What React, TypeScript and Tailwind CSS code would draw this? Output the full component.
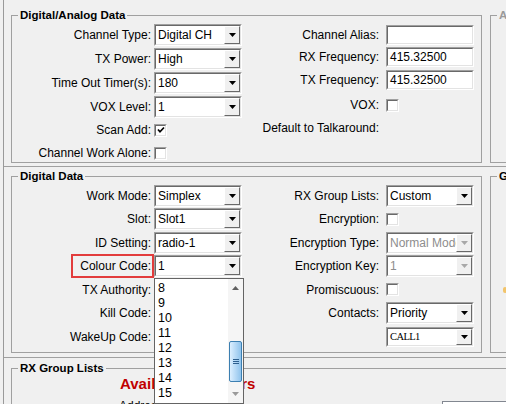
import React from "react";

// classic sunken edge used by combos, edits and checkboxes
const OUTER = "border border-t-[#a0a0a0] border-l-[#a0a0a0] border-r-white border-b-white";
const INNER = "border border-t-[#696969] border-l-[#696969] border-r-[#e3e3e3] border-b-[#e3e3e3]";

const Arrow = ({ color = "#000" }: { color?: string }) => (
  <svg width="7" height="4" viewBox="0 0 7 4">
    <polygon points="0,0 7,0 3.5,4" fill={color} />
  </svg>
);

function Combo({ value, short, disabled, serif }: { value?: string; short?: boolean; disabled?: boolean; serif?: boolean }) {
  return (
    <div className={`${OUTER} ${short ? "h-[20px]" : "h-[22px]"} w-[88px]`}>
      <div className={`${INNER} flex h-full w-full items-center bg-white`}>
        <span
          className={`flex-1 overflow-hidden whitespace-nowrap pl-[2px] ${disabled ? "text-[#8d8d8d]" : "text-black"} ${
            serif ? "font-['Liberation_Serif',serif] text-[10.5px] tracking-[-0.6px]" : ""
          }`}
        >
          {value}
        </span>
        <div className="flex h-full w-[16px] items-center justify-center border border-t-white border-l-white border-r-[#696969] border-b-[#696969] bg-[#f0f0f0]">
          <Arrow color={disabled ? "#a8a8a8" : "#000"} />
        </div>
      </div>
    </div>
  );
}

function Edit({ value }: { value?: string }) {
  return (
    <div className={`${OUTER} h-[20px] w-[88px]`}>
      <div className={`${INNER} flex h-full w-full items-center bg-white pl-[2px]`}>{value}</div>
    </div>
  );
}

function Check({ checked }: { checked?: boolean }) {
  return (
    <div className={`${OUTER} h-[13px] w-[13px]`}>
      <div className={`${INNER} flex h-full w-full items-center justify-center bg-white`}>
        {checked && (
          <svg width="8" height="8" viewBox="0 0 8 8">
            <polyline points="1,3.5 3,5.8 7,1.5" fill="none" stroke="#000" strokeWidth="1.7" />
          </svg>
        )}
      </div>
    </div>
  );
}

const Legend = ({ children, gray }: { children: React.ReactNode; gray?: boolean }) => (
  <legend className={`ml-[6px] px-[2px] text-[11.5px] font-bold leading-[14px] ${gray ? "text-[#9a9a9a]" : "text-black"}`}>
    {children}
  </legend>
);

function ColourList() {
  return (
    <div className="absolute left-0 top-[23px] z-10 flex h-[126px] w-[90px] border border-[#646464] bg-white">
      <div className="flex-1 pl-[3px] pt-[2px]">
        {["8", "9", "10", "11", "12", "13", "14", "15"].map((n) => (
          <div key={n} className="h-[15px] text-[12.5px] leading-[15px]">{n}</div>
        ))}
      </div>
      <div className="flex w-[15px] flex-col bg-[#f5f5f5]">
        <div className="flex h-[17px] items-center justify-center">
          <svg width="7" height="4" viewBox="0 0 7 4"><polygon points="0,4 7,4 3.5,0" fill="#606060" /></svg>
        </div>
        <div className="h-[45px]" />
        <div className="mx-[1px] flex h-[41px] flex-col items-center justify-center gap-[1px] rounded-[2px] border border-[#3c7fb1] bg-gradient-to-r from-[#dcefff] to-[#8fc3ec]">
          <div className="h-[1px] w-[6px] bg-[#2d5f8f]" />
          <div className="h-[1px] w-[6px] bg-[#2d5f8f]" />
          <div className="h-[1px] w-[6px] bg-[#2d5f8f]" />
        </div>
        <div className="h-[3px]" />
        <div className="flex h-[17px] items-center justify-center">
          <Arrow color="#9a9a9a" />
        </div>
      </div>
    </div>
  );
}

type Row = { l: string; lc: React.ReactNode; r: string; rc: React.ReactNode };

export default function App() {
  const digital: Row[] = [
    { l: "Work Mode:", lc: <Combo value="Simplex" />, r: "RX Group Lists:", rc: <Combo value="Custom" /> },
    { l: "Slot:", lc: <Combo value="Slot1" />, r: "Encryption:", rc: <Check /> },
    { l: "ID Setting:", lc: <Combo value="radio-1" />, r: "Encryption Type:", rc: <Combo value="Normal Mode" disabled /> },
    {
      l: "Colour Code:",
      lc: (
        <div className="relative">
          <Combo value="1" />
          <ColourList />
        </div>
      ),
      r: "Encryption Key:",
      rc: <Combo value="1" disabled />,
    },
    { l: "TX Authority:", lc: <Combo value="Allow All" />, r: "Promiscuous:", rc: <Check /> },
    { l: "Kill Code:", lc: <Combo value="" />, r: "Contacts:", rc: <Combo value="Priority" /> },
    { l: "WakeUp Code:", lc: <Combo value="" />, r: "", rc: <Combo value="CALL1" short serif /> },
  ];

  return (
    <div className="relative h-[404px] w-[506px] overflow-hidden bg-[#f0f0f0] font-['Liberation_Sans',Arial,sans-serif] text-[12px] text-black">
      <div className="ml-[3px] h-full border-l border-l-[#9a9a9a]">
        {/* channel data */}
        <div className="flex h-[167px] border-b border-b-[#a0a0a0] pl-[7px] pt-[8px]">
          <fieldset className="h-[155px] w-[471px] shrink-0 border border-[#a0a0a0]">
            <Legend>Digital/Analog Data</Legend>
            <div className="flex">
              <div className="flex w-[230px] flex-col pt-[1px]">
                {[
                  ["Channel Type:", <Combo value="Digital CH" />],
                  ["TX Power:", <Combo value="High" />],
                  ["Time Out Timer(s):", <Combo value="180" />],
                  ["VOX Level:", <Combo value="1" />],
                ].map(([label, ctl], i) => (
                  <div key={i} className="flex h-[24px] items-center">
                    <span className="w-[139px] text-right">{label}</span>
                    <div className="ml-[3px]">{ctl}</div>
                  </div>
                ))}
                <div className="flex h-[22px] items-center">
                  <span className="w-[139px] text-right">Scan Add:</span>
                  <div className="ml-[3px]"><Check checked /></div>
                </div>
                <div className="flex h-[24px] items-center">
                  <span className="w-[139px] text-right">Channel Work Alone:</span>
                  <div className="ml-[3px]"><Check /></div>
                </div>
              </div>
              <div className="flex flex-col pt-[1px]">
                <div className="flex h-[23px] items-center">
                  <span className="w-[137px] text-right">Channel Alias:</span>
                  <div className="ml-[7px]"><Edit /></div>
                </div>
                <div className="flex h-[22px] items-center">
                  <span className="w-[137px] text-right">RX Frequency:</span>
                  <div className="ml-[7px]"><Edit value="415.32500" /></div>
                </div>
                <div className="flex h-[23px] items-center">
                  <span className="w-[137px] text-right">TX Frequency:</span>
                  <div className="ml-[7px]"><Edit value="415.32500" /></div>
                </div>
                <div className="mt-[3px] flex h-[22px] items-center">
                  <span className="w-[137px] text-right">VOX:</span>
                  <div className="ml-[7px]"><Check /></div>
                </div>
                <div className="flex h-[24px] items-center">
                  <span className="w-[137px] text-right">Default to Talkaround:</span>
                </div>
              </div>
            </div>
          </fieldset>
          <fieldset className="ml-[8px] h-[155px] w-[200px] shrink-0 border border-[#a0a0a0]">
            <Legend gray>Analog Data</Legend>
          </fieldset>
        </div>

        {/* digital data */}
        <div className="flex h-[191px] border-b border-b-[#a0a0a0] pl-[7px] pt-[2px]">
          <fieldset className="h-[184px] w-[471px] shrink-0 border border-[#a0a0a0]">
            <Legend>Digital Data</Legend>
            <div className="flex flex-col pt-[1px]">
              {digital.map((row, i) => (
                <div key={i} className="flex h-[23.5px] items-center">
                  <span className="relative w-[139px] text-right">
                    {row.l}
                    {i === 3 && (
                      <span className="absolute -right-[3px] left-[59px] top-1/2 h-[24px] -translate-y-1/2 border-2 border-[#e23c3c]" />
                    )}
                  </span>
                  <div className="ml-[3px] w-[88px]">{row.lc}</div>
                  <span className="w-[137px] text-right">{row.r}</span>
                  <div className="ml-[7px]">{row.rc}</div>
                </div>
              ))}
            </div>
          </fieldset>
          <fieldset className="ml-[8px] h-[184px] w-[200px] shrink-0 border border-[#a0a0a0]">
            <Legend>GPS</Legend>
            <div className="ml-[12px] mt-[104px] h-[6px] w-[4px] rounded-full bg-[#f2c46a]" />
          </fieldset>
        </div>

        {/* rx group lists */}
        <div className="pl-[7px] pt-[3px]">
          <fieldset className="h-[120px] w-[620px] border border-[#a0a0a0]">
            <Legend>RX Group Lists</Legend>
            <div className="ml-[108px] text-[15px] font-bold leading-[17px] text-[#c00000]">Available Members</div>
            <div className="mt-[7px] flex items-start">
              <span className="ml-[107px] w-[323px] leading-[14px]">Address Book Contacts</span>
              <div className="mt-[2px] h-[60px] w-[160px] border border-[#828790] bg-white" />
            </div>
          </fieldset>
        </div>
      </div>
    </div>
  );
}
